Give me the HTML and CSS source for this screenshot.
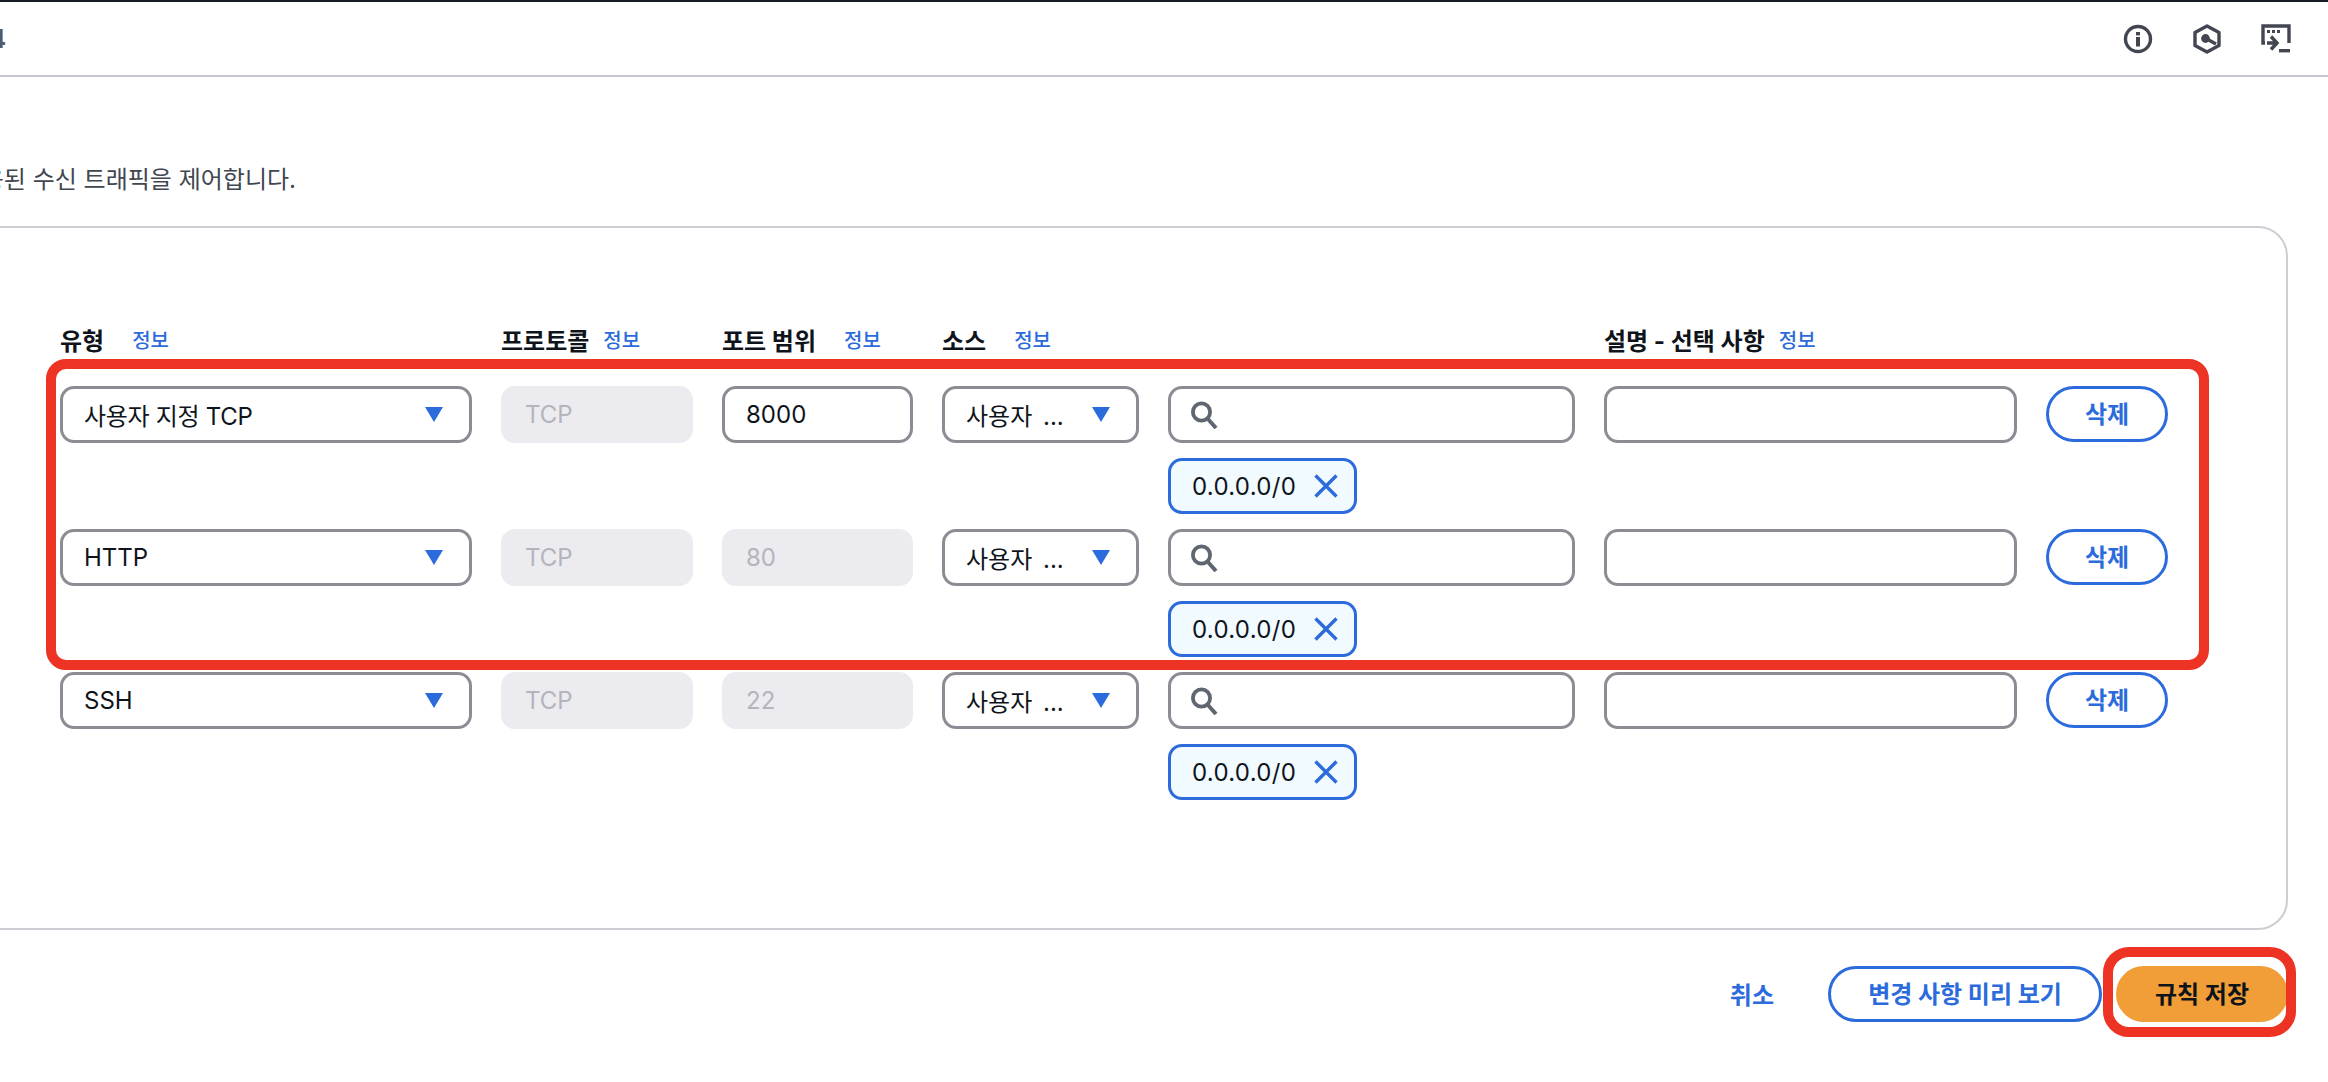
FILE: index.html
```html
<!DOCTYPE html>
<html lang="ko">
<head>
    <meta charset="UTF-8">
    <meta name="viewport" content="width=device-width, initial-scale=1.0">
    <title>인바운드 규칙 편집</title>
    <link rel="stylesheet" href="styles.css">
</head>

<body>
<div class="topbar">
    <div class="crumb"><span>t3.micro-0004</span></div>
    <div class="tools">
        <svg class="tool-info" width="30" height="30" viewBox="0 0 30 30">
            <circle cx="15" cy="15" r="12.5" fill="none" stroke="#424650" stroke-width="3.4"/>
            <rect x="13" y="8" width="4" height="3.4" fill="#424650"/>
            <rect x="13" y="13" width="4" height="9.5" fill="#424650"/>
        </svg>
        <svg class="tool-hex" width="28" height="30" viewBox="0 0 28 30">
            <path d="M14 2 L26 8.5 V21.5 L14 28 L2 21.5 V8.5 Z" fill="none" stroke="#424650" stroke-width="3.4" stroke-linejoin="round"/>
            <circle cx="12.5" cy="14.5" r="4.4" fill="#424650"/>
            <path d="M13 14.5 L23 20" stroke="#424650" stroke-width="3.4"/>
        </svg>
        <svg class="tool-shell" width="30" height="30" viewBox="0 0 30 30">
            <path d="M4 19 H2 V2 H28 V19" fill="none" stroke="#424650" stroke-width="3.4"/>
            <rect x="6" y="6" width="3" height="3" fill="#424650"/>
            <rect x="11" y="6" width="3" height="3" fill="#424650"/>
            <rect x="16" y="6" width="3" height="3" fill="#424650"/>
            <path d="M6 19 H15 M10 12.5 L16 19 L10 25.5" fill="none" stroke="#424650" stroke-width="3.4"/>
            <rect x="18" y="25" width="11" height="3.4" fill="#424650"/>
        </svg>
    </div>
</div>

<div class="desc"><span>인바운드 규칙은 인스턴스에 도달하도록 허용된 수신 트래픽을 제어합니다.</span></div>

<div class="panel">
    <div class="grid heads">
        <div class="head"><b>유형</b><a>정보</a></div>
        <div class="head tight"><b>프로토콜</b><a>정보</a></div>
        <div class="head"><b>포트 범위</b><a>정보</a></div>
        <div class="head"><b>소스</b><a>정보</a></div>
        <div></div>
        <div class="head tight"><b>설명 - 선택 사항</b><a>정보</a></div>
    </div>

    <div class="rules">
        <div class="mark mark-rows"></div>

        <div class="grid rule">
            <div class="field select"><span class="narrow">사용자 지정 TCP</span><i class="caret"></i></div>
            <div class="field off">TCP</div>
            <div class="field">8000</div>
            <div class="field select"><span class="cut">사용자 ...</span><i class="caret"></i></div>
            <div class="source">
                <div class="field search">
                    <svg width="28" height="28" viewBox="0 0 28 28">
                        <circle cx="11.5" cy="11" r="8.6" fill="none" stroke="#5f6670" stroke-width="3.8"/>
                        <path d="M17.5 17.5 L26 27" stroke="#5f6670" stroke-width="4"/>
                    </svg>
                </div>
                <div class="token">0.0.0.0/0
                    <svg width="24" height="24" viewBox="0 0 24 24"><path d="M1.5 1.5 L22.5 22.5 M22.5 1.5 L1.5 22.5" stroke="#2b6bdc" stroke-width="3.4"/></svg>
                </div>
            </div>
            <div class="field"></div>
            <button class="btn">삭제</button>
        </div>

        <div class="grid rule">
            <div class="field select"><span>HTTP</span><i class="caret"></i></div>
            <div class="field off">TCP</div>
            <div class="field off">80</div>
            <div class="field select"><span class="cut">사용자 ...</span><i class="caret"></i></div>
            <div class="source">
                <div class="field search">
                    <svg width="28" height="28" viewBox="0 0 28 28">
                        <circle cx="11.5" cy="11" r="8.6" fill="none" stroke="#5f6670" stroke-width="3.8"/>
                        <path d="M17.5 17.5 L26 27" stroke="#5f6670" stroke-width="4"/>
                    </svg>
                </div>
                <div class="token">0.0.0.0/0
                    <svg width="24" height="24" viewBox="0 0 24 24"><path d="M1.5 1.5 L22.5 22.5 M22.5 1.5 L1.5 22.5" stroke="#2b6bdc" stroke-width="3.4"/></svg>
                </div>
            </div>
            <div class="field"></div>
            <button class="btn">삭제</button>
        </div>

        <div class="grid rule">
            <div class="field select"><span>SSH</span><i class="caret"></i></div>
            <div class="field off">TCP</div>
            <div class="field off">22</div>
            <div class="field select"><span class="cut">사용자 ...</span><i class="caret"></i></div>
            <div class="source">
                <div class="field search">
                    <svg width="28" height="28" viewBox="0 0 28 28">
                        <circle cx="11.5" cy="11" r="8.6" fill="none" stroke="#5f6670" stroke-width="3.8"/>
                        <path d="M17.5 17.5 L26 27" stroke="#5f6670" stroke-width="4"/>
                    </svg>
                </div>
                <div class="token">0.0.0.0/0
                    <svg width="24" height="24" viewBox="0 0 24 24"><path d="M1.5 1.5 L22.5 22.5 M22.5 1.5 L1.5 22.5" stroke="#2b6bdc" stroke-width="3.4"/></svg>
                </div>
            </div>
            <div class="field"></div>
            <button class="btn">삭제</button>
        </div>
    </div>
</div>

<div class="footer">
    <a class="cancel">취소</a>
    <button class="btn preview">변경 사항 미리 보기</button>
    <div class="save-wrap">
        <button class="btn save">규칙 저장</button>
        <div class="mark mark-save"></div>
    </div>
</div>
</body>
</html>
```

FILE: styles.css
```css
* {
    box-sizing: border-box;
}

body {
    margin: 0;
    height: 1082px;
    overflow: hidden;
    background: #fff;
    color: #0f141a;
    font-family: Inter, "Noto Sans CJK KR", sans-serif;
    font-size: 24px;
}

.topbar {
    display: flex;
    justify-content: space-between;
    align-items: center;
    height: 77px;
    border-top: 2px solid #161d26;
    border-bottom: 2px solid #c6c6cd;
}

.crumb {
    display: flex;
    justify-content: flex-end;
    width: 6px;
    overflow: hidden;
    font-size: 26px;
    font-weight: 700;
    color: #545b64;
    white-space: nowrap;
}

.tools {
    display: flex;
    align-items: center;
    gap: 40px;
    padding-right: 37px;
}

.desc {
    display: flex;
    justify-content: flex-end;
    width: 296px;
    margin-top: 87px;
    margin-bottom: 30px;
    overflow: hidden;
    font-size: 24px;
    line-height: 32px;
    color: #414750;
    white-space: nowrap;
}

.panel {
    width: 2329px;
    height: 704px;
    margin-left: -41px;
    padding: 94px 0 0 99px;
    border: 2px solid #cdcdd3;
    border-radius: 30px;
}

.grid {
    display: grid;
    grid-template-columns: 412px 192px 191px 197px 407px 413px 122px;
    column-gap: 29px;
}

.heads {
    align-items: center;
    height: 32px;
    margin-bottom: 32px;
}

.head {
    display: flex;
    align-items: center;
    gap: 28px;
    white-space: nowrap;
}

.head.tight {
    gap: 14px;
}

.head a {
    color: #2b6bdc;
    font-size: 20px;
    font-weight: 500;
}

.rules {
    position: relative;
}

.rule {
    align-items: start;
    height: 143px;
}

.field {
    display: flex;
    align-items: center;
    height: 57px;
    padding: 0 21px;
    border: 3px solid #8c8c94;
    border-radius: 14px;
    background: #fff;
}

.select {
    justify-content: space-between;
    padding-right: 26px;
}

.narrow {
    letter-spacing: -0.3px;
}

.cut {
    word-spacing: 4px;
}

.off {
    border-color: #ebebf0;
    background: #ebebf0;
    color: #b4b4bb;
}

.caret {
    width: 18px;
    height: 15px;
    background: #2b6bdc;
    clip-path: polygon(0 0, 100% 0, 50% 100%);
}

.search {
    padding-left: 19px;
}

.token {
    display: flex;
    align-items: center;
    justify-content: space-between;
    width: 189px;
    height: 56px;
    margin-top: 15px;
    padding: 0 16px 0 21px;
    border: 3px solid #2b6bdc;
    border-radius: 14px;
    background: #f1faff;
    letter-spacing: 0.3px;
}

.btn {
    height: 56px;
    padding: 0 0 3px;
    border: 3px solid #2b6bdc;
    border-radius: 28px;
    background: #fff;
    color: #2b6bdc;
    font-family: inherit;
    font-size: 24px;
    font-weight: 700;
}

.footer {
    display: flex;
    justify-content: flex-end;
    align-items: center;
    gap: 14px;
    margin-top: 36px;
    padding-right: 40px;
}

.cancel {
    margin-right: 40px;
    margin-bottom: 2px;
    color: #2b6bdc;
    font-size: 24px;
    font-weight: 700;
}

.preview {
    width: 274px;
}

.save-wrap {
    position: relative;
}

.save {
    display: block;
    width: 172px;
    border-color: #f29e38;
    background: #f29e38;
    color: #0f141a;
}

/* red highlight boxes drawn on top of the form */
.mark {
    position: absolute;
    border: 10px solid #ec3324;
}

.mark-rows {
    top: -27px;
    left: -14px;
    width: 2163px;
    height: 311px;
    border-radius: 20px;
}

.mark-save {
    top: -19px;
    left: -13px;
    right: -8px;
    bottom: -15px;
    border-radius: 26px;
}
```
